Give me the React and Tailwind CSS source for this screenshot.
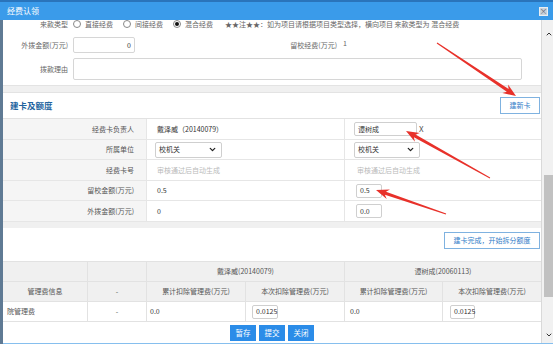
import { ChevronDown, ChevronUp } from "lucide-react";

const arrows = [
  [437, 43, 516, 96],
  [490, 178, 406, 131],
  [446, 214, 376, 190],
];

// tapered annotation arrow, tail -> tip
function arrowPoints(x1, y1, x2, y2) {
  const dx = x2 - x1, dy = y2 - y1, len = Math.hypot(dx, dy);
  const ux = dx / len, uy = dy / len, nx = -uy, ny = ux;
  const bx = x2 - ux * 13, by = y2 - uy * 13;
  const cx = x2 - ux * 10, cy = y2 - uy * 10;
  return [
    [x1 + nx * 0.5, y1 + ny * 0.5],
    [cx + nx * 1.6, cy + ny * 1.6],
    [bx + nx * 5, by + ny * 5],
    [x2, y2],
    [bx - nx * 5, by - ny * 5],
    [cx - nx * 1.6, cy - ny * 1.6],
    [x1 - nx * 0.5, y1 - ny * 0.5],
  ].map(p => p.map(v => v.toFixed(1)).join(",")).join(" ");
}

const Radio = ({ checked, label }) => (
  <span className="flex items-center gap-[4px] mr-[10px]">
    <span className="w-[8px] h-[8px] rounded-full border border-[#888] bg-white flex items-center justify-center">
      {checked && <span className="w-[4px] h-[4px] rounded-full bg-[#111]" />}
    </span>
    <span className="text-[#666]">{label}</span>
  </span>
);

const Select = ({ w }) => (
  <div className={`${w} h-[16px] border border-[#cfcfcf] rounded-[2px] bg-white flex items-center justify-between pl-[3px] pr-[4px] text-[#333]`}>
    <span>校机关</span>
    <ChevronDown size={9} strokeWidth={3.5} color="#222" />
  </div>
);

const Input = ({ w, children, right }) => (
  <div className={`${w} h-[14px] border border-[#cfcfcf] rounded-[2px] bg-white flex items-center px-[3px] text-[#333] ${right ? "justify-end" : ""}`}>
    {children}
  </div>
);

const rows = [
  { label: "经费卡负责人", h: "h-[21px]", a: <span className="text-[#333]">戴泽威（20140079）</span>, b: <div className="flex items-center gap-[2px]"><Input w="w-[63px]">谭树成</Input><span className="text-[#555] text-[8px]">X</span></div> },
  { label: "所属单位", h: "h-[20px]", a: <div className="-ml-[2px]"><Select w="w-[67px]" /></div>, b: <Select w="w-[66px]" /> },
  { label: "经费卡号", h: "h-[21px]", a: <span className="text-[#bbb]">审核通过后自动生成</span>, b: <span className="text-[#bbb] ml-[3px]">审核通过后自动生成</span> },
  { label: "留校金额(万元)", h: "h-[20px]", a: <span className="text-[#333]">0.5</span>, b: <div className="ml-[2px]"><Input w="w-[26px]">0.5</Input></div> },
  { label: "外拨金额(万元)", h: "h-[21px]", a: <span className="text-[#333]">0</span>, b: <div className="ml-[2px]"><Input w="w-[26px]">0.0</Input></div> },
];

const Btn = ({ children }) => (
  <div className="h-[16px] w-[26px] bg-[#2b8ce8] text-white flex items-center justify-center text-[7.5px]">{children}</div>
);

export default function App() {
  const hc = "flex items-center justify-center border-r border-b border-[#e2e2e2]";
  return (
    <div className="w-[553px] h-[344px] overflow-hidden bg-[#5f7a94] flex flex-col relative font-['Microsoft_YaHei','Noto_Sans_CJK_SC',sans-serif] text-[7px] leading-none">
      {/* title bar */}
      <div className="h-[20px] shrink-0 bg-[#3a9bea] border-t-2 border-[#2a74bb] flex items-center justify-between pl-[7px] pr-[5px]">
        <span className="text-white text-[8px]">经费认领</span>
        <span className="w-[9px] h-[9px] bg-[#c9d3dc] border border-[#e8eef3] flex items-center justify-center text-[#667] text-[8px] leading-none">×</span>
      </div>

      <div className="flex-1 min-h-0 flex ml-[3px] bg-white border-b border-[#86bfee]">
        <div className="w-[539px] shrink-0 overflow-hidden border-r border-[#d9d9d9] flex flex-col">
          {/* basic form */}
          <div className="-mt-[4px] pb-[5px]">
            <div className="h-[16px] flex items-center">
              <span className="w-[65px] text-right text-[#666]">来款类型</span>
              <div className="ml-[5px] flex items-center">
                <Radio label="直接经费" />
                <Radio label="间接经费" />
                <Radio checked label="混合经费" />
                <span className="ml-[2px] text-[#666]">★★注★★：如为项目请根据项目类型选择，横向项目 来款类型为 混合经费</span>
              </div>
            </div>
            <div className="mt-[5px] h-[16px] flex items-center">
              <div className="w-[269px] flex items-center">
                <span className="w-[65px] text-right text-[#666]">外拨金额(万元)</span>
                <div className="ml-[5px] w-[62px] h-[16px] border border-[#d6d6d6] rounded-[2px] flex items-center justify-end pr-[3px] text-[#333]">0</div>
              </div>
              <span className="w-[65px] text-right text-[#666]">留校经费(万元)</span>
              <span className="ml-[6px] -mt-[4px] text-[#666]">1</span>
            </div>
            <div className="mt-[5px] h-[22px] flex items-center">
              <span className="w-[65px] text-right text-[#666]">拨款理由</span>
              <div className="ml-[5px] w-[449px] h-[22px] border border-[#d6d6d6] rounded-[2px]" />
            </div>
          </div>

          <div className="h-[8px] shrink-0 bg-[#f0f0f0] border-y border-[#e3e3e3]" />

          {/* card panel */}
          <div className="h-[25px] shrink-0 flex items-center justify-between pl-[7px] pr-[1px]">
            <span className="text-[#23649e] font-bold text-[8.5px]">建卡及额度</span>
            <div className="w-[40px] h-[17px] border border-[#7fb2e0] bg-white flex items-center justify-center text-[#2f7cc8] text-[7px]">建新卡</div>
          </div>
          <div className="border-t border-[#e2e2e2]">
            {rows.map(r => (
              <div key={r.label} className={`${r.h} flex border-b border-[#e6e6e6]`}>
                <div className="w-[144px] bg-[#f5f5f5] border-r border-[#e6e6e6] flex items-center justify-end pr-[12px] text-[#555]">{r.label}</div>
                <div className="w-[198px] border-r border-[#e6e6e6] flex items-center pl-[10px]">{r.a}</div>
                <div className="flex-1 flex items-center pl-[9px]">{r.b}</div>
              </div>
            ))}
          </div>
          <div className="h-[6px] shrink-0 bg-[#f0f0f0]" />

          <div className="h-[33px] shrink-0 flex justify-end items-start pt-[4px] pr-[1px]">
            <div className="w-[96px] h-[17px] border border-[#7fb2e0] flex items-center justify-center text-[#2f7cc8]">建卡完成，开始拆分额度</div>
          </div>

          {/* fee table */}
          <div className="grid grid-cols-[85px_59px_99px_99px_98px_1fr] border-t border-[#e2e2e2] text-[#555]">
            <div className={`${hc} h-[20px] bg-[#f0f0f0]`} />
            <div className={`${hc} h-[20px] bg-[#f0f0f0]`} />
            <div className={`${hc} h-[20px] bg-[#f0f0f0] col-span-2`}>戴泽威(20140079)</div>
            <div className={`${hc} h-[20px] bg-[#f0f0f0] col-span-2 border-r-0`}>谭树成(20060113)</div>

            <div className={`${hc} h-[20px] bg-[#f0f0f0]`}>管理费信息</div>
            <div className={`${hc} h-[20px] bg-[#f0f0f0]`}>-</div>
            <div className={`${hc} h-[20px] bg-[#f0f0f0]`}>累计扣除管理费(万元)</div>
            <div className={`${hc} h-[20px] bg-[#f0f0f0]`}>本次扣除管理费(万元)</div>
            <div className={`${hc} h-[20px] bg-[#f0f0f0]`}>累计扣除管理费(万元)</div>
            <div className={`${hc} h-[20px] bg-[#f0f0f0] border-r-0`}>本次扣除管理费(万元)</div>

            <div className={`${hc} h-[20px] justify-start pl-[4px]`}>院管理费</div>
            <div className={`${hc} h-[20px]`}>-</div>
            <div className={`${hc} h-[20px] justify-start pl-[3px] text-[#333]`}>0.0</div>
            <div className={`${hc} h-[20px] justify-start pl-[6px]`}><Input w="w-[26px]">0.0125</Input></div>
            <div className={`${hc} h-[20px] justify-start pl-[5px] text-[#333]`}>0.0</div>
            <div className={`${hc} h-[20px] justify-start pl-[7px] border-r-0`}><Input w="w-[25px]">0.0125</Input></div>
          </div>

          <div className="flex-1 flex justify-center items-start pt-[3px] gap-[3px]">
            <Btn>暂存</Btn>
            <Btn>提交</Btn>
            <Btn>关闭</Btn>
          </div>
        </div>

        {/* scrollbar */}
        <div className="flex-1 bg-[#f1f1f1] flex flex-col items-center pt-[10px] pb-[4px] pl-[2px]">
          <ChevronUp size={8} strokeWidth={3} color="#333" />
          <div className="w-full mt-[137px] h-[122px] bg-[#c1c1c1]" />
          <div className="flex-1" />
          <ChevronDown size={8} strokeWidth={3} color="#333" />
        </div>
      </div>

      <svg className="absolute inset-0 pointer-events-none" width="553" height="344">
        {arrows.map((a, i) => (
          <polygon key={i} points={arrowPoints(...a)} fill="#e8312a" />
        ))}
      </svg>
    </div>
  );
}
